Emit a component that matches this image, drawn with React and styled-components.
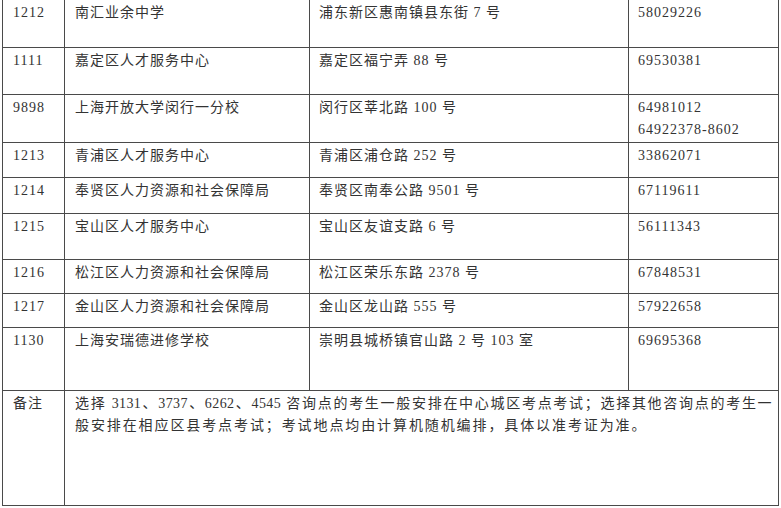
import styled, { createGlobalStyle } from "styled-components";

const GlobalStyle = createGlobalStyle`
  html, body {
    margin: 0;
    padding: 0;
    background: #ffffff;
  }
`;

const Page = styled.div`
  padding-left: 2px;
  width: 781px;
  box-sizing: border-box;
  font-family: "Liberation Serif", "Noto Sans CJK SC", serif;
  font-size: 14px;
  color: #333333;
`;

const Table = styled.table`
  width: 776px;
  border-collapse: collapse;
  table-layout: fixed;
`;

const Row = styled.tr`
  height: ${({ $h }) => $h}px;

  &:first-child td {
    border-top: none;
  }
`;

const Cell = styled.td`
  border: 1px solid #4a4a4a;
  vertical-align: top;
  padding: 2px 4px 0 ${({ $pad }) => $pad || 9}px;
  line-height: 22px;
  letter-spacing: 1px;
  white-space: nowrap;
  overflow: hidden;
`;

const NoteCell = styled(Cell)`
  padding-right: 6px;
`;

const NoteLine = styled.span`
  display: block;
  text-align: ${({ $justify }) => ($justify ? "justify" : "left")};
  text-align-last: ${({ $justify }) => ($justify ? "justify" : "auto")};
  letter-spacing: ${({ $justify }) => ($justify ? 0.4 : 1.9)}px;
`;

const rows = [
  { code: "1212", name: "南汇业余中学", addr: "浦东新区惠南镇县东街 7 号", tel: ["58029226"], h: 47 },
  { code: "1111", name: "嘉定区人才服务中心", addr: "嘉定区福宁弄 88 号", tel: ["69530381"], h: 47 },
  { code: "9898", name: "上海开放大学闵行一分校", addr: "闵行区莘北路 100 号", tel: ["64981012", "64922378-8602"], h: 48 },
  { code: "1213", name: "青浦区人才服务中心", addr: "青浦区浦仓路 252 号", tel: ["33862071"], h: 35 },
  { code: "1214", name: "奉贤区人力资源和社会保障局", addr: "奉贤区南奉公路 9501 号", tel: ["67119611"], h: 36 },
  { code: "1215", name: "宝山区人才服务中心", addr: "宝山区友谊支路 6 号", tel: ["56111343"], h: 46 },
  { code: "1216", name: "松江区人力资源和社会保障局", addr: "松江区荣乐东路 2378 号", tel: ["67848531"], h: 34 },
  { code: "1217", name: "金山区人力资源和社会保障局", addr: "金山区龙山路 555 号", tel: ["57922658"], h: 34 },
  { code: "1130", name: "上海安瑞德进修学校", addr: "崇明县城桥镇官山路 2 号 103 室", tel: ["69695368"], h: 63 },
];

export default function App() {
  return (
    <>
      <GlobalStyle />
      <Page>
        <Table>
          <colgroup>
            <col style={{ width: 62 }} />
            <col style={{ width: 245 }} />
            <col style={{ width: 319 }} />
            <col style={{ width: 150 }} />
          </colgroup>
          <tbody>
            {rows.map((r) => (
              <Row key={r.code} $h={r.h}>
                <Cell $pad={10}>{r.code}</Cell>
                <Cell $pad={10}>{r.name}</Cell>
                <Cell>{r.addr}</Cell>
                <Cell>
                  {r.tel.map((t) => (
                    <div key={t}>{t}</div>
                  ))}
                </Cell>
              </Row>
            ))}
            <Row $h={115}>
              <Cell $pad={10}>备注</Cell>
              <NoteCell colSpan={3} $pad={10}>
                <NoteLine $justify>
                  选择 3131、3737、6262、4545 咨询点的考生一般安排在中心城区考点考试；选择其他咨询点的考生一
                </NoteLine>
                <NoteLine>
                  般安排在相应区县考点考试；考试地点均由计算机随机编排，具体以准考证为准。
                </NoteLine>
              </NoteCell>
            </Row>
          </tbody>
        </Table>
      </Page>
    </>
  );
}
